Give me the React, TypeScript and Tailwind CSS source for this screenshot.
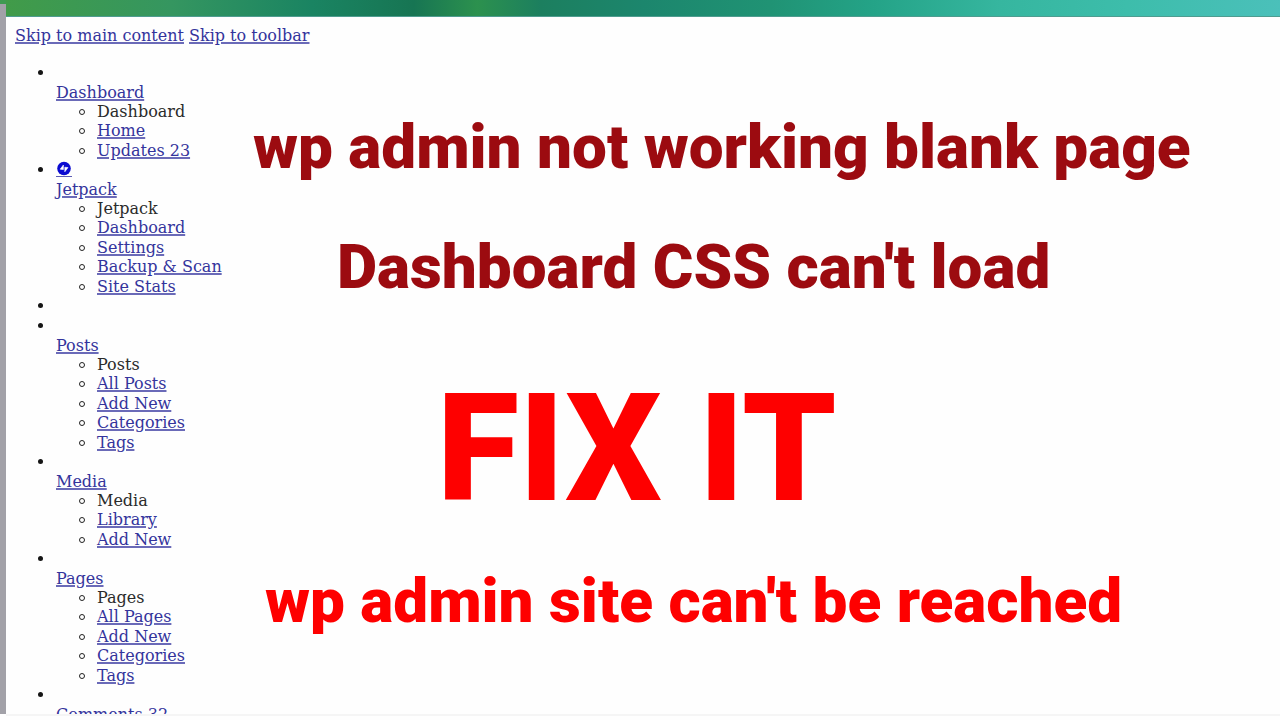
type MenuGroup = {
  title: string;
  items: string[];
  icon?: boolean;
  separatorAfter?: boolean;
};

const MENU: MenuGroup[] = [
  { title: "Dashboard", items: ["Home", "Updates 23"] },
  {
    title: "Jetpack",
    items: ["Dashboard", "Settings", "Backup & Scan", "Site Stats"],
    icon: true,
    separatorAfter: true,
  },
  { title: "Posts", items: ["All Posts", "Add New", "Categories", "Tags"] },
  { title: "Media", items: ["Library", "Add New"] },
  { title: "Pages", items: ["All Pages", "Add New", "Categories", "Tags"] },
  { title: "Comments 32", items: [] },
];

function MenuLink({ children }: { children: React.ReactNode }) {
  return (
    <a href="#" className="text-[#34349c] underline decoration-[#6a6ab8] decoration-2 underline-offset-1">
      {children}
    </a>
  );
}

function JetpackIcon() {
  return (
    <svg viewBox="0 0 16 16" className="h-4 w-4" aria-hidden="true">
      <circle cx="8" cy="7.5" r="6.8" fill="#0a0ad0" />
      <path d="M7.4 4v4.6L4.2 8.2z" fill="#fff" stroke="#fff" strokeWidth="0.6" />
      <path d="M8.8 10.8V6.2l3.2.4z" fill="#fff" stroke="#fff" strokeWidth="0.6" />
      <path d="M0 15.5h16" stroke="#5c5cb4" strokeWidth="1" />
    </svg>
  );
}

function Bullet() {
  return <span className="absolute left-[-18px] top-[7px] size-[5px] rounded-full bg-[#151515]" />;
}

function SubItem({ children }: { children: React.ReactNode }) {
  return (
    <li className="relative leading-5 odd:leading-[19px]">
      <span className="absolute left-[-18px] top-[7px] size-[6px] rounded-full border border-[#222]" />
      {children}
    </li>
  );
}

function Group({ group }: { group: MenuGroup }) {
  return (
    <>
      <li className="relative">
        <Bullet />
        <div className="h-5">
          {group.icon && (
            <a href="#" aria-label={group.title} className="inline-block">
              <JetpackIcon />
            </a>
          )}
        </div>
        <div className="leading-[19px]">
          <MenuLink>{group.title}</MenuLink>
        </div>
        {group.items.length > 0 && (
          <ul className="pl-[41px]">
            <SubItem>{group.title}</SubItem>
            {group.items.map((item) => (
              <SubItem key={item}>
                <MenuLink>{item}</MenuLink>
              </SubItem>
            ))}
          </ul>
        )}
      </li>
      {group.separatorAfter && (
        <li className="relative h-5">
          <Bullet />
        </li>
      )}
    </>
  );
}

export default function App() {
  return (
    <div className="flex h-screen overflow-hidden bg-[#fefefe]">
      {/* window edge */}
      <div className="flex w-[6px] shrink-0 flex-col pb-[6px]">
        <div className="h-1 bg-[#3f9a52]" />
        <div className="flex-1 bg-[#a2a1a8]" />
      </div>

      <div className="flex min-w-0 flex-1 flex-col">
        <div className="h-[17px] shrink-0 border-b border-[#4f9c90] bg-[linear-gradient(90deg,#419b49_0%,#359660_13%,#1a8462_24%,#177553_32%,#2c914e_37%,#1c7f5f_42%,#1c866d_50%,#209374_60%,#24a387_68%,#36b69f_78%,#3dbdab_88%,#4bc0ba_100%)]" />

        <div className="min-h-0 flex-1 overflow-hidden border-b-2 border-[#f5f5f5] pl-[9px] pt-[9px]">
          <nav
            aria-label="Skip links"
            className="flex gap-[5px] font-['DejaVu_Serif','Liberation_Serif',serif] text-base leading-5"
          >
            <MenuLink>Skip to main content</MenuLink>
            <MenuLink>Skip to toolbar</MenuLink>
          </nav>

          <div className="flex pt-[17px]">
            <ul className="w-[238px] shrink-0 whitespace-nowrap pl-[41px] font-['DejaVu_Serif','Liberation_Serif',serif] text-base text-[#2b2b2b]">
              {MENU.map((group) => (
                <Group key={group.title} group={group} />
              ))}
            </ul>

            <main className="flex-1 whitespace-nowrap pt-12 font-[Roboto,sans-serif] text-[62px] font-black leading-[72px] text-[#9c0b10]">
              <h1>wp admin not working blank page</h1>
              <h2 className="pl-[84px] pt-12">Dashboard CSS can't load</h2>
              <p className="pl-[184px] pt-[58px] text-[150px] leading-[176px] text-[#fe0000]">FIX IT</p>
              <p className="pl-3 pt-7 text-[#fe0000]">wp admin site can't be reached</p>
            </main>
          </div>
        </div>
        <div className="h-1 shrink-0" />
      </div>
    </div>
  );
}
